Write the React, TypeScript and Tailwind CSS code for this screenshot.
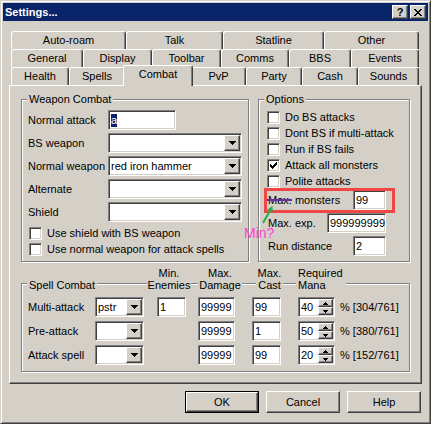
import React from "react";

const SUNKEN =
  "bg-white border border-t-[#808080] border-l-[#808080] border-b-white border-r-white shadow-[inset_1px_1px_0_#404040,inset_-1px_-1px_0_#d4d0c8]";
const RAISED =
  "bg-[#d4d0c8] border border-t-white border-l-white border-b-[#404040] border-r-[#404040] shadow-[inset_-1px_-1px_0_#808080]";

function DownArrow() {
  return (
    <svg width="7" height="4" viewBox="0 0 7 4" shapeRendering="crispEdges">
      <path d="M0 0h7v1h-1v1h-1v1h-1v1h-1v-1h-1v-1h-1v-1h-1z" fill="#000" />
    </svg>
  );
}

function SmallUp() {
  return (
    <svg width="5" height="3" viewBox="0 0 5 3" shapeRendering="crispEdges">
      <path d="M2 0h1v1h1v1h1v1h-5v-1h1v-1h1z" fill="#000" />
    </svg>
  );
}

function SmallDown() {
  return (
    <svg width="5" height="3" viewBox="0 0 5 3" shapeRendering="crispEdges">
      <path d="M0 0h5v1h-1v1h-1v1h-1v-1h-1v-1h-1z" fill="#000" />
    </svg>
  );
}

function Combo({ className, text }: { className: string; text?: string }) {
  return (
    <div className={`${SUNKEN} ${className} shrink-0 h-[20px] p-[1px] flex items-stretch`}>
      <div className="flex-1 flex items-center pl-[1px] leading-[13px] whitespace-nowrap overflow-hidden">
        {text}
      </div>
      <div className={`${RAISED} w-[16px] flex items-center justify-center`}>
        <DownArrow />
      </div>
    </div>
  );
}

function Field({ className, children }: { className: string; children?: React.ReactNode }) {
  return (
    <div
      className={`${SUNKEN} ${className} shrink-0 h-[20px] flex items-center pl-[2px] leading-[13px] whitespace-nowrap overflow-hidden`}
    >
      {children}
    </div>
  );
}

function Spin({ value }: { value: string }) {
  return (
    <div className={`${SUNKEN} w-[37px] h-[20px] p-[1px] flex items-stretch shrink-0`}>
      <div className="flex-1 flex items-center pl-[1px] leading-[13px]">{value}</div>
      <div className="w-[15px] flex flex-col">
        <div className={`${RAISED} h-[8px] flex items-center justify-center`}>
          <SmallUp />
        </div>
        <div className={`${RAISED} flex-1 flex items-center justify-center`}>
          <SmallDown />
        </div>
      </div>
    </div>
  );
}

function Check() {
  return (
    <svg width="7" height="7" viewBox="0 0 7 7" shapeRendering="crispEdges">
      <path
        d="M6 0h1v1h-1z M5 1h2v1h-2z M0 2h1v1h-1z M4 2h3v1h-3z M0 3h2v1h-2z M3 3h3v1h-3z M0 4h5v1h-5z M1 5h3v1h-3z M2 6h1v1h-1z"
        fill="#000"
      />
    </svg>
  );
}

function CheckRow({ label, checked }: { label: string; checked?: boolean }) {
  return (
    <div className="h-[16px] flex items-center">
      <div className={`${SUNKEN} w-[13px] h-[13px] shrink-0 flex items-center justify-center`}>
        {checked && <Check />}
      </div>
      <span className="ml-[5px] leading-[13px] whitespace-nowrap">{label}</span>
    </div>
  );
}

function Group({
  className,
  label,
  labelTop,
  children,
}: {
  className: string;
  label: string;
  labelTop: string;
  children?: React.ReactNode;
}) {
  return (
    <div className={`relative border border-[#808080] shadow-[inset_1px_1px_0_#fff,1px_1px_0_#fff] ${className}`}>
      <span className={`absolute left-[5px] ${labelTop} px-[2px] bg-[#d4d0c8] leading-[13px] whitespace-nowrap`}>
        {label}
      </span>
      {children}
    </div>
  );
}

function Tab({ label, w }: { label: string; w: string }) {
  return (
    <div
      className={`${w} h-[18px] shrink-0 border-t border-l border-r border-t-white border-l-white border-r-[#404040] shadow-[inset_-1px_0_0_#808080] rounded-t-[3px] flex items-center justify-center leading-[13px] whitespace-nowrap`}
    >
      {label}
    </div>
  );
}

function Button({ label, def }: { label: string; def?: boolean }) {
  if (def) {
    return (
      <div className="w-[74px] h-[22px] border border-black">
        <div className={`${RAISED} w-full h-full flex items-center justify-center leading-[13px]`}>{label}</div>
      </div>
    );
  }
  return (
    <div className={`${RAISED} w-[74px] h-[22px] flex items-center justify-center leading-[13px]`}>{label}</div>
  );
}

export default function App() {
  const row1: [string, string][] = [
    ["Auto-roam", "w-[115px]"],
    ["Talk", "w-[97px]"],
    ["Statline", "w-[101px]"],
    ["Other", "w-[95px]"],
  ];
  const row2: [string, string][] = [
    ["General", "w-[72px]"],
    ["Display", "w-[69px]"],
    ["Toolbar", "w-[69px]"],
    ["Comms", "w-[68px]"],
    ["BBS", "w-[62px]"],
    ["Events", "w-[68px]"],
  ];

  return (
    <div className="font-['Liberation_Sans',Arial,sans-serif] text-[11px] text-black">
      <div className="relative w-[431px] h-[424px] bg-[#d4d0c8] border border-t-[#d4d0c8] border-l-[#d4d0c8] border-b-[#404040] border-r-[#404040] shadow-[inset_1px_1px_0_#fff,inset_-1px_-1px_0_#808080] p-[2px] flex flex-col">
        {/* Title bar */}
        <div className="h-[18px] bg-[#0a246a] flex items-center pl-[2px] pr-[2px]">
          <span className="flex-1 text-white font-bold text-[11px] leading-[13px]">Settings...</span>
          <div className="flex gap-[2px]">
            <div
              className={`${RAISED} w-[16px] h-[14px] flex items-center justify-center font-bold text-[11px] leading-[11px]`}
            >
              ?
            </div>
            <div className={`${RAISED} w-[16px] h-[14px] flex items-center justify-center`}>
              <svg width="8" height="7" viewBox="0 0 8 7" shapeRendering="crispEdges">
                <path
                  d="M0 0h2v1h-2z M6 0h2v1h-2z M1 1h2v1h-2z M5 1h2v1h-2z M2 2h4v1h-4z M3 3h2v1h-2z M2 4h4v1h-4z M1 5h2v1h-2z M5 5h2v1h-2z M0 6h2v1h-2z M6 6h2v1h-2z"
                  fill="#000"
                />
              </svg>
            </div>
          </div>
        </div>

        {/* Tabs */}
        <div className="mt-[10px] ml-[8px] flex flex-col">
          <div className="flex h-[18px]">
            {row1.map(([l, w]) => (
              <Tab key={l} label={l} w={w} />
            ))}
          </div>
          <div className="flex h-[18px]">
            {row2.map(([l, w]) => (
              <Tab key={l} label={l} w={w} />
            ))}
          </div>
          <div className="flex h-[18px] items-end">
            <Tab label="Health" w="w-[58px]" />
            <Tab label="Spells" w="w-[56px]" />
            <div className="relative z-10 w-[70px] -mx-[2px] h-[21px] -mb-[1px] shrink-0 bg-[#d4d0c8] border-t border-l border-r border-t-white border-l-white border-r-[#404040] shadow-[inset_-1px_0_0_#808080] rounded-t-[3px] flex items-center justify-center pb-[3px] leading-[13px]">
              Combat
            </div>
            <Tab label="PvP" w="w-[55px]" />
            <Tab label="Party" w="w-[56px]" />
            <Tab label="Cash" w="w-[56px]" />
            <Tab label="Sounds" w="w-[61px]" />
          </div>
        </div>

        {/* Panel */}
        <div className="ml-[6px] w-[413px] h-[299px] border border-t-white border-l-white border-b-[#404040] border-r-[#404040] shadow-[inset_-1px_-1px_0_#808080] pt-[13px] pl-[11px] flex flex-col">
          <div className="flex gap-[9px]">
            <Group className="w-[228px] h-[163px] pt-[10px] pl-[6px]" label="Weapon Combat" labelTop="top-[-7px]">
              <div className="flex flex-col gap-[3px]">
                <div className="flex items-center">
                  <span className="w-[80px]">Normal attack</span>
                  <Field className="w-[68px]">
                    <span className="bg-[#0a246a] text-white">a</span>
                  </Field>
                </div>
                <div className="flex items-center">
                  <span className="w-[80px]">BS weapon</span>
                  <Combo className="w-[134px]" />
                </div>
                <div className="flex items-center">
                  <span className="w-[80px]">Normal weapon</span>
                  <Combo className="w-[134px]" text="red iron hammer" />
                </div>
                <div className="flex items-center">
                  <span className="w-[80px]">Alternate</span>
                  <Combo className="w-[134px]" />
                </div>
                <div className="flex items-center">
                  <span className="w-[80px]">Shield</span>
                  <Combo className="w-[134px]" />
                </div>
              </div>
              <div className="mt-[3px] ml-[1px] flex flex-col">
                <CheckRow label="Use shield with BS weapon" />
                <CheckRow label="Use normal weapon for attack spells" />
              </div>
            </Group>

            <Group className="w-[152px] h-[163px] pt-[9px] pl-[8px]" label="Options" labelTop="top-[-7px]">
              <div className="flex flex-col">
                <CheckRow label="Do BS attacks" />
                <CheckRow label="Dont BS if multi-attack" />
                <CheckRow label="Run if BS fails" />
                <CheckRow label="Attack all monsters" checked />
                <CheckRow label="Polite attacks" />
              </div>
              <div className="mt-[1px] pl-[1px] pr-[23px] flex flex-col gap-[3px]">
                <div className="flex items-center justify-between">
                  <span>Max. monsters</span>
                  <Field className="w-[33px]">99</Field>
                </div>
                <div className="flex items-center justify-between">
                  <span>Max. exp.</span>
                  <Field className="w-[59px]">999999999</Field>
                </div>
                <div className="flex items-center justify-between">
                  <span>Run distance</span>
                  <Field className="w-[33px]">2</Field>
                </div>
              </div>
            </Group>
          </div>

          <Group className="mt-[21px] w-[389px] h-[89px] pt-[13px] pl-[6px]" label="Spell Combat" labelTop="top-[-5px]">
            <div className="absolute left-[125px] top-[-17px] w-[44px] bg-[#d4d0c8] text-center leading-[12px]">
              Min.
              <br />
              Enemies
            </div>
            <div className="absolute left-[176px] top-[-17px] w-[44px] bg-[#d4d0c8] text-center leading-[12px]">
              Max.
              <br />
              Damage
            </div>
            <div className="absolute left-[234px] top-[-17px] w-[27px] bg-[#d4d0c8] text-center leading-[12px]">
              Max.
              <br />
              Cast
            </div>
            <div className="absolute left-[274px] top-[-17px] w-[50px] bg-[#d4d0c8] pl-[2px] leading-[12px]">
              Required
              <br />
              Mana
            </div>
            <div className="flex flex-col gap-[4px]">
              <div className="flex items-center h-[20px]">
                <span className="w-[67px]">Multi-attack</span>
                <Combo className="w-[49px]" text="pstr" />
                <Field className="ml-[13px] w-[29px]">1</Field>
                <Field className="ml-[12px] w-[37px]">99999</Field>
                <Field className="ml-[17px] w-[29px]">99</Field>
                <div className="ml-[17px]">
                  <Spin value="40" />
                </div>
                <span className="ml-[5px] whitespace-nowrap">% [304/761]</span>
              </div>
              <div className="flex items-center h-[20px]">
                <span className="w-[67px]">Pre-attack</span>
                <Combo className="w-[49px]" />
                <div className="ml-[13px] w-[29px]" />
                <Field className="ml-[12px] w-[37px]">99999</Field>
                <Field className="ml-[17px] w-[29px]">1</Field>
                <div className="ml-[17px]">
                  <Spin value="50" />
                </div>
                <span className="ml-[5px] whitespace-nowrap">% [380/761]</span>
              </div>
              <div className="flex items-center h-[20px]">
                <span className="w-[67px]">Attack spell</span>
                <Combo className="w-[49px]" />
                <div className="ml-[13px] w-[29px]" />
                <Field className="ml-[12px] w-[37px]">99999</Field>
                <Field className="ml-[17px] w-[29px]">99</Field>
                <div className="ml-[17px]">
                  <Spin value="20" />
                </div>
                <span className="ml-[5px] whitespace-nowrap">% [152/761]</span>
              </div>
            </div>
          </Group>
        </div>

        {/* Buttons */}
        <div className="mt-[7px] mr-[7px] flex justify-end gap-[7px]">
          <Button label="OK" def />
          <Button label="Cancel" />
          <Button label="Help" />
        </div>

        {/* Annotations (overlay) */}
        <div className="absolute left-[263px] top-[187px] w-[131px] h-[25px] border-[3px] border-[#f04646] pointer-events-none" />
        <div className="absolute left-[266px] top-[198px] w-[25px] h-[2px] bg-[#6a2d9e]" />
        <svg className="absolute left-[255px] top-[201px]" width="22" height="24" viewBox="0 0 22 24">
          <line x1="7" y1="21" x2="15.5" y2="6" stroke="#22b04b" strokeWidth="2" />
          <polygon points="16.5,4 16.6,10.5 11.4,7.6" fill="#22b04b" />
        </svg>
        <span className="absolute left-[243px] top-[224px] text-[14px] leading-[16px] text-[#ff3fd4]">Min?</span>
      </div>
    </div>
  );
}
